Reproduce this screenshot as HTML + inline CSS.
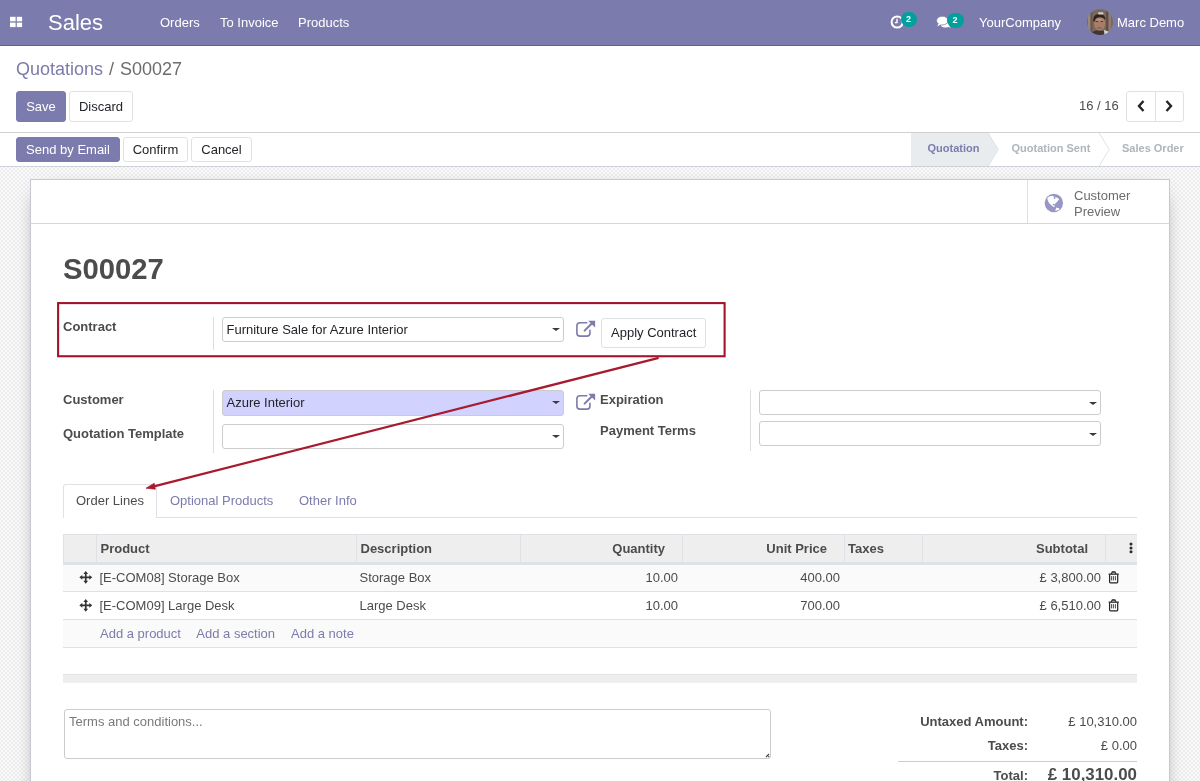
<!DOCTYPE html>
<html><head><meta charset="utf-8">
<style>
*{box-sizing:border-box;margin:0;padding:0}
html,body{width:1200px;height:781px;overflow:hidden;background:#fff}
body{font-family:"Liberation Sans",sans-serif;font-size:13px;color:#4c4c4c;position:relative;will-change:transform}
.a{position:absolute;white-space:nowrap}
.nav{left:0;top:0;width:1200px;height:46px;background:#7C7BAD;border-bottom:1px solid #5f5e97}
.nav .t{color:#fff;font-size:13px;top:15px}
.badge{position:absolute;background:#00A09D;color:#fff;font-size:9px;font-weight:bold;border-radius:8px;height:14.5px;text-align:center;line-height:15px;padding-right:1px}
.btn{position:absolute;border:1px solid #dee2e6;border-radius:3px;background:#fff;color:#212529;text-align:center;font-size:13px}
.btnp{background:#7C7BAD;border-color:#7C7BAD;color:#fff}
.sheetbg{left:0;top:167px;width:1200px;height:614px;background:conic-gradient(#fafafa 25%,#ededed 0 50%,#fafafa 0 75%,#ededed 0) 1px 1px/4px 4px}
.sheet{left:30px;top:179px;width:1140px;height:700px;background:#fff;border:1px solid #c8c8d3;box-shadow:0 6px 20px -11px rgba(0,0,0,.7)}
.lbl{font-weight:bold;color:#4c4c4c}
.inp{position:absolute;border:1px solid #ccc;border-radius:3px;background:#fff}
.caret{position:absolute;width:0;height:0;border-left:4px solid transparent;border-right:4px solid transparent;border-top:3.5px solid #3a3a3a;margin-top:1px}
.vsep{position:absolute;width:1px;background:#ddd}
.link{color:#7C7BAD}
</style></head><body>
<!-- navbar -->
<div class="a nav">
  <svg class="a" style="left:0;top:0" width="30" height="46" viewBox="0 0 30 46"><rect x="10" y="16.8" width="5.6" height="4.5" fill="#fff"/><rect x="16.8" y="16.8" width="5.3" height="4.5" fill="#fff"/><rect x="10" y="22.6" width="5.6" height="4.5" fill="#fff"/><rect x="16.8" y="22.6" width="5.3" height="4.5" fill="#fff"/></svg>
  <div class="a t" style="left:48px;top:10px;font-size:22px">Sales</div>
  <div class="a t" style="left:160px">Orders</div>
  <div class="a t" style="left:220px">To Invoice</div>
  <div class="a t" style="left:298px">Products</div>
  <svg class="a" style="left:890px;top:14.5px" width="15" height="15" viewBox="0 0 15 15"><circle cx="7.2" cy="7" r="5.6" fill="none" stroke="#fff" stroke-width="2"/><path d="M7 3.8V7.6H4.8" fill="none" stroke="#fff" stroke-width="1.4"/></svg>
  <div class="badge" style="left:901px;top:12px;width:16px">2</div>
  <svg class="a" style="left:934px;top:13px" width="20" height="18" viewBox="0 0 20 18"><ellipse cx="11.5" cy="11.2" rx="4.8" ry="3.3" fill="#fff"/><path d="M13.5 13 L16.8 15.3 L14.8 12.2z" fill="#fff"/><ellipse cx="8.3" cy="7.6" rx="5.8" ry="4.4" fill="#fff" stroke="#7C7BAD" stroke-width="0.8"/><path d="M4.6 10.5 L3.2 13.4 L7.2 11.2z" fill="#fff"/></svg>
  <div class="badge" style="left:947px;top:13px;width:17px">2</div>
  <div class="a t" style="left:979px">YourCompany</div>
  <svg class="a" style="left:1087px;top:9px" width="26" height="26" viewBox="0 0 26 26"><defs><clipPath id="av"><circle cx="13" cy="13" r="13"/></clipPath><filter id="bl"><feGaussianBlur stdDeviation="0.45"/></filter></defs><g clip-path="url(#av)"><g filter="url(#bl)"><rect x="-1" y="-1" width="28" height="28" fill="#7a685b"/><rect x="1" y="0" width="2" height="26" fill="#9a8878"/><rect x="4" y="0" width="1.5" height="26" fill="#6a5a4e"/><rect x="19" y="0" width="2" height="26" fill="#5e4f45"/><rect x="22" y="0" width="2" height="26" fill="#8f7d6e"/><path d="M3 27 Q5 21 12 21 Q19 21 21 27z" fill="#3f3630"/><path d="M17 21 L21.5 22.5 L22 27 L17.5 27z" fill="#d4d2ce"/><ellipse cx="12.6" cy="14.6" rx="5.6" ry="7.2" fill="#a47e68"/><path d="M9 10.5 Q12.5 9 16 10.5 L16 12 Q12.5 11 9 12z" fill="#d6a5a0" opacity="0.6"/><path d="M6.2 12 Q6 4.5 12.8 5 Q18.6 5.5 18.4 11 Q16.5 8 12.5 8.3 Q8 8.6 7.6 13z" fill="#2f241e"/><rect x="11" y="3.2" width="5.5" height="2.2" rx="1" fill="#cfcac6"/><path d="M8.8 12.4 H11.2 M13.6 12.4 H16" stroke="#4a3428" stroke-width="1"/><path d="M10.2 19 H14.6" stroke="#6a4a3c" stroke-width="0.8" fill="none"/></g></g></svg>
  <div class="a t" style="left:1117px">Marc Demo</div>
</div>
<!-- control panel -->
<div class="a" style="left:16px;top:58px;font-size:18px;line-height:22px"><span class="link">Quotations</span></div>
<div class="a" style="left:109px;top:58px;font-size:18px;line-height:22px;color:#6c6c6c">/</div>
<div class="a" style="left:120px;top:58px;font-size:18px;line-height:22px;color:#6c6c6c">S00027</div>
<div class="btn btnp" style="left:16px;top:91px;width:50px;height:31px;line-height:29px">Save</div>
<div class="btn" style="left:69px;top:91px;width:64px;height:31px;line-height:29px">Discard</div>
<div class="a" style="left:1079px;top:98px;color:#4c4c4c">16 / 16</div>
<div class="btn" style="left:1126px;top:91px;width:58px;height:31px"></div>
<div class="a" style="left:1155px;top:91px;width:1px;height:31px;background:#dee2e6"></div>
<svg class="a" style="left:1136px;top:99px" width="10" height="14" viewBox="0 0 10 14"><path d="M7.5 2 L3 7 L7.5 12" fill="none" stroke="#212529" stroke-width="2.4"/></svg>
<svg class="a" style="left:1164px;top:99px" width="10" height="14" viewBox="0 0 10 14"><path d="M2.5 2 L7 7 L2.5 12" fill="none" stroke="#212529" stroke-width="2.4"/></svg>
<div class="a" style="left:0;top:132px;width:1200px;height:1px;background:#d0d0d0"></div>
<!-- statusbar -->
<div class="btn btnp" style="left:16px;top:137px;width:104px;height:25px;line-height:23px">Send by Email</div>
<div class="btn" style="left:123px;top:137px;width:65px;height:25px;line-height:23px">Confirm</div>
<div class="btn" style="left:191px;top:137px;width:61px;height:25px;line-height:23px">Cancel</div>
<svg class="a" style="left:900px;top:133px" width="300" height="33" viewBox="0 0 300 33">
  <path d="M11 0 H88.2 L98.2 16.5 L88.2 33 H11z" fill="#e9ecef"/>
  <path d="M88.2 0 L98.2 16.5 L88.2 33" fill="none" stroke="#dee2e6"/>
  <path d="M199.2 0 L209.2 16.5 L199.2 33" fill="none" stroke="#dee2e6"/>
  <text x="27.5" y="19.2" font-family="Liberation Sans" font-weight="bold" font-size="11" fill="#7C7BAD">Quotation</text>
  <text x="111.5" y="19.2" font-family="Liberation Sans" font-weight="bold" font-size="11" fill="#adb5bd">Quotation Sent</text>
  <text x="222" y="19.2" font-family="Liberation Sans" font-weight="bold" font-size="11" fill="#adb5bd">Sales Order</text>
</svg>
<div class="a" style="left:0;top:166px;width:1200px;height:1px;background:#ced4da"></div>
<div class="a sheetbg"></div>
<div class="a sheet"></div>
<!-- SHEET -->
<div class="a" style="left:31px;top:223px;width:1138px;height:1px;background:#d3d8dd"></div>
<div class="a" style="left:1027px;top:180px;width:1px;height:43px;background:#dde1e6"></div>
<svg class="a" style="left:1040px;top:190px" width="28" height="26" viewBox="0 0 28 26"><circle cx="13.85" cy="13" r="9.2" fill="#9796c6"/><path d="M7.2 8.3 L9 6.4 L12.5 5.8 L13.8 6.8 L16.8 7.4 L19.2 9 L17.2 11.8 L15.6 13.3 L14.4 14.3 L14.6 16.4 L14 17.3 L11.6 15.6 L9.2 13.2 L7.9 10.8z" fill="#fff"/><circle cx="14.6" cy="8" r="0.9" fill="#9796c6"/><circle cx="13.6" cy="14.6" r="0.9" fill="#9796c6"/><path d="M15.2 20.9 L16.3 17.6 L19.6 18.4 L18.6 20.1z" fill="#fff"/></svg>
<div class="a" style="left:1074px;top:188px;line-height:16px;color:#6c6c6c">Customer<br>Preview</div>
<div class="a" style="left:63px;top:255px;font-size:29.25px;line-height:1;font-weight:bold;color:#4c4c4c">S00027</div>
<!-- contract -->
<div class="a lbl" style="left:63px;top:320px;line-height:1">Contract</div>
<div class="vsep" style="left:213px;top:317px;height:33px"></div>
<div class="inp" style="left:222px;top:317px;width:342px;height:25px"></div>
<div class="a" style="left:226.5px;top:323px;line-height:1;color:#212529">Furniture Sale for Azure Interior</div>
<div class="caret" style="left:552px;top:327px"></div>
<svg class="a" style="left:572px;top:316px" width="28" height="24" viewBox="0 0 28 24"><path d="M14.75 6.75 H8 Q4.9 6.75 4.9 9.85 V17.05 Q4.9 20.15 8 20.15 H14.85 Q17.95 20.15 17.95 17.05 V14.3" fill="none" stroke="#7C7BAD" stroke-width="1.6" stroke-linecap="round"/><path d="M12.6 14.6 L19.5 7.7" stroke="#7C7BAD" stroke-width="2" stroke-linecap="round"/><path d="M16.1 4.7 H23.1 V11.4z" fill="#7C7BAD"/></svg>
<div class="btn" style="left:601px;top:318px;width:105px;height:30px"></div>
<div class="a" style="left:611px;top:326px;line-height:1;color:#212529">Apply Contract</div>
<!-- customer group -->
<div class="a lbl" style="left:63px;top:393px;line-height:1">Customer</div>
<div class="a lbl" style="left:63px;top:427px;line-height:1">Quotation Template</div>
<div class="vsep" style="left:213px;top:390px;height:63px"></div>
<div class="inp" style="left:222px;top:390px;width:342px;height:26px;background:#d2d2ff"></div>
<div class="a" style="left:226.5px;top:396px;line-height:1;color:#212529">Azure Interior</div>
<div class="caret" style="left:552px;top:400px"></div>
<div class="inp" style="left:222px;top:424px;width:342px;height:25px"></div>
<div class="caret" style="left:552px;top:434px"></div>
<svg class="a" style="left:572px;top:389px" width="28" height="24" viewBox="0 0 28 24"><path d="M14.75 6.75 H8 Q4.9 6.75 4.9 9.85 V17.05 Q4.9 20.15 8 20.15 H14.85 Q17.95 20.15 17.95 17.05 V14.3" fill="none" stroke="#7C7BAD" stroke-width="1.6" stroke-linecap="round"/><path d="M12.6 14.6 L19.5 7.7" stroke="#7C7BAD" stroke-width="2" stroke-linecap="round"/><path d="M16.1 4.7 H23.1 V11.4z" fill="#7C7BAD"/></svg>
<div class="a lbl" style="left:600px;top:393px;line-height:1">Expiration</div>
<div class="a lbl" style="left:600px;top:424px;line-height:1">Payment Terms</div>
<div class="vsep" style="left:750px;top:390px;height:61px"></div>
<div class="inp" style="left:759px;top:390px;width:342px;height:25px"></div>
<div class="caret" style="left:1089px;top:401px"></div>
<div class="inp" style="left:759px;top:421px;width:342px;height:25px"></div>
<div class="caret" style="left:1089px;top:432px"></div>
<!-- tabs -->
<div class="a" style="left:63px;top:517px;width:1074px;height:1px;background:#dee2e6"></div>
<div class="a" style="left:63px;top:484px;width:94px;height:34px;border:1px solid #dee2e6;border-bottom:none;background:#fff;border-radius:3px 3px 0 0"></div>
<div class="a" style="left:76px;top:494.2px;line-height:1;color:#4c4c4c">Order Lines</div>
<div class="a link" style="left:170px;top:494.2px;line-height:1">Optional Products</div>
<div class="a link" style="left:299px;top:494.2px;line-height:1">Other Info</div>
<!-- table -->
<div class="a" style="left:63px;top:534px;width:1074px;height:31px;background:#eee;border-top:1px solid #dee2e6;border-bottom:3px solid #dee2e6"></div>
<div class="a" style="left:63px;top:565px;width:1074px;height:26px;background:#fafafa"></div>
<div class="a" style="left:63px;top:591px;width:1074px;height:1px;background:#dee2e6"></div>
<div class="a" style="left:63px;top:619px;width:1074px;height:1px;background:#dee2e6"></div>
<div class="a" style="left:63px;top:620px;width:1074px;height:27px;background:#fafafa"></div>
<div class="a" style="left:63px;top:647px;width:1074px;height:1px;background:#dee2e6"></div>
<div class="a" style="left:63px;top:534px;width:1px;height:28px;background:#dee2e6"></div>
<div class="a" style="left:96px;top:534px;width:1px;height:28px;background:#dee2e6"></div>
<div class="a" style="left:356px;top:534px;width:1px;height:28px;background:#dee2e6"></div>
<div class="a" style="left:520px;top:534px;width:1px;height:28px;background:#dee2e6"></div>
<div class="a" style="left:682px;top:534px;width:1px;height:28px;background:#dee2e6"></div>
<div class="a" style="left:844px;top:534px;width:1px;height:28px;background:#dee2e6"></div>
<div class="a" style="left:922px;top:534px;width:1px;height:28px;background:#dee2e6"></div>
<div class="a" style="left:1105px;top:534px;width:1px;height:28px;background:#dee2e6"></div>
<div class="a lbl" style="left:100.5px;top:542px;line-height:1">Product</div>
<div class="a lbl" style="left:360.5px;top:542px;line-height:1">Description</div>
<div class="a lbl" style="left:520px;top:542px;width:145px;text-align:right;line-height:1">Quantity</div>
<div class="a lbl" style="left:682px;top:542px;width:145px;text-align:right;line-height:1">Unit Price</div>
<div class="a lbl" style="left:848px;top:542px;line-height:1">Taxes</div>
<div class="a lbl" style="left:922px;top:542px;width:166px;text-align:right;line-height:1">Subtotal</div>
<svg class="a" style="left:1128.6px;top:542px" width="4" height="12" viewBox="0 0 4 12"><circle cx="2" cy="2" r="1.5" fill="#2a2a2a"/><circle cx="2" cy="5.9" r="1.5" fill="#2a2a2a"/><circle cx="2" cy="9.7" r="1.5" fill="#2a2a2a"/></svg>
<!-- rows -->
<div class="a" style="left:99.5px;top:571px;line-height:1">[E-COM08] Storage Box</div>
<div class="a" style="left:359.5px;top:571px;line-height:1">Storage Box</div>
<div class="a" style="left:520px;top:571px;width:158px;text-align:right;line-height:1">10.00</div>
<div class="a" style="left:682px;top:571px;width:158px;text-align:right;line-height:1">400.00</div>
<div class="a" style="left:922px;top:571px;width:179px;text-align:right;line-height:1">£ 3,800.00</div>
<div class="a" style="left:99.5px;top:599px;line-height:1">[E-COM09] Large Desk</div>
<div class="a" style="left:359.5px;top:599px;line-height:1">Large Desk</div>
<div class="a" style="left:520px;top:599px;width:158px;text-align:right;line-height:1">10.00</div>
<div class="a" style="left:682px;top:599px;width:158px;text-align:right;line-height:1">700.00</div>
<div class="a" style="left:922px;top:599px;width:179px;text-align:right;line-height:1">£ 6,510.00</div>
<svg class="a" style="left:76px;top:568px" width="20" height="20" viewBox="0 0 20 20"><path d="M8.9 4.8 H10.6 V8.5 H14.4 V10.2 H10.6 V13.9 H8.9 V10.2 H5.1 V8.5 H8.9z" fill="#333"/><path d="M9.75 2.9 L12.1 5.9 H7.4z M9.75 15.8 L12.1 12.8 H7.4z M3.3 9.36 L6.3 7 V11.7z M16.3 9.36 L13.3 7 V11.7z" fill="#333"/></svg>
<svg class="a" style="left:76px;top:596px" width="20" height="20" viewBox="0 0 20 20"><path d="M8.9 4.8 H10.6 V8.5 H14.4 V10.2 H10.6 V13.9 H8.9 V10.2 H5.1 V8.5 H8.9z" fill="#333"/><path d="M9.75 2.9 L12.1 5.9 H7.4z M9.75 15.8 L12.1 12.8 H7.4z M3.3 9.36 L6.3 7 V11.7z M16.3 9.36 L13.3 7 V11.7z" fill="#333"/></svg>
<svg class="a" style="left:1104px;top:566px" width="20" height="22" viewBox="0 0 20 22"><rect x="4.65" y="7.5" width="10.15" height="1.3" fill="#222"/><path d="M7.3 7.8 L8.3 5.9 H10.9 L11.9 7.8" fill="#999" stroke="#222" stroke-width="1.1"/><path d="M5.6 8.7 V16 Q5.6 16.85 6.5 16.85 H12.9 Q13.7 16.85 13.7 16 V8.7" fill="none" stroke="#222" stroke-width="1.2"/><path d="M7.6 10.1 V14.4 M9.4 10.1 V14.4 M11.4 10.1 V14.4" stroke="#333" stroke-width="0.9"/></svg>
<svg class="a" style="left:1104px;top:594px" width="20" height="22" viewBox="0 0 20 22"><rect x="4.65" y="7.5" width="10.15" height="1.3" fill="#222"/><path d="M7.3 7.8 L8.3 5.9 H10.9 L11.9 7.8" fill="#999" stroke="#222" stroke-width="1.1"/><path d="M5.6 8.7 V16 Q5.6 16.85 6.5 16.85 H12.9 Q13.7 16.85 13.7 16 V8.7" fill="none" stroke="#222" stroke-width="1.2"/><path d="M7.6 10.1 V14.4 M9.4 10.1 V14.4 M11.4 10.1 V14.4" stroke="#333" stroke-width="0.9"/></svg>
<div class="a link" style="left:100px;top:627px;line-height:1">Add a product</div>
<div class="a link" style="left:196.3px;top:627px;line-height:1">Add a section</div>
<div class="a link" style="left:291px;top:627px;line-height:1">Add a note</div>
<div class="a" style="left:63px;top:674px;width:1074px;height:9px;background:#eee;border-top:1px solid #e2e2e2"></div>
<!-- bottom -->
<div class="inp" style="left:64px;top:709px;width:707px;height:50px"></div>
<div class="a" style="left:69px;top:715px;line-height:1;color:#7a7a7a">Terms and conditions...</div>
<svg class="a" style="left:762px;top:750px" width="9" height="9" viewBox="0 0 9 9"><path d="M4 7 L7 4 M6.2 7.2 L7.2 6.2" stroke="#444" stroke-width="1.1"/></svg>
<div class="a lbl" style="left:901px;top:715px;width:127px;text-align:right;line-height:1">Untaxed Amount:</div>
<div class="a" style="left:1030px;top:715px;width:107px;text-align:right;line-height:1">£ 10,310.00</div>
<div class="a lbl" style="left:901px;top:739px;width:127px;text-align:right;line-height:1">Taxes:</div>
<div class="a" style="left:1030px;top:739px;width:107px;text-align:right;line-height:1">£ 0.00</div>
<div class="a" style="left:898px;top:761px;width:239px;height:1px;background:#ccc"></div>
<div class="a lbl" style="left:901px;top:769px;width:127px;text-align:right;line-height:1">Total:</div>
<div class="a lbl" style="left:1000px;top:767px;width:137px;text-align:right;line-height:1;font-size:16.9px">£ 10,310.00</div>
<!-- annotation -->
<svg class="a" style="left:0;top:0" width="1200" height="781" viewBox="0 0 1200 781">
  <rect x="58.1" y="303.1" width="666.5" height="53.15" fill="none" stroke="#a3142a" stroke-width="2.1"/>
  <line x1="657.8" y1="358.1" x2="152" y2="486.9" stroke="#a81a2e" stroke-width="2.2" stroke-linecap="round"/>
  <path d="M146 488.2 L154.2 483.3 L155.3 489.2z" fill="#a81a2e" stroke="#a81a2e" stroke-width="0.7" stroke-linejoin="round"/>
</svg>
</body></html>
